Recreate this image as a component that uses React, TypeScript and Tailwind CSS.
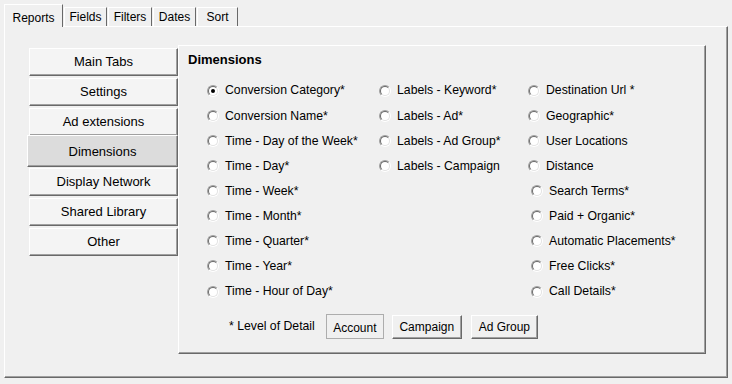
import React from "react";

const raised =
  "border border-t-white border-l-white border-r-[#696969] border-b-[#696969] shadow-[inset_-1px_-1px_0_#a0a0a0]";

function Radio({ checked }: { checked?: boolean }) {
  return (
    <div className="w-[12px] h-[12px] shrink-0 rounded-full border border-t-[#a0a0a0] border-l-[#a0a0a0] border-r-white border-b-white">
      <div className="w-full h-full rounded-full border border-t-[#696969] border-l-[#696969] border-r-[#e3e3e3] border-b-[#e3e3e3] bg-white flex items-center justify-center">
        {checked && <div className="w-[4px] h-[4px] rounded-full bg-black" />}
      </div>
    </div>
  );
}

function Item({ label, checked, shift }: { label: string; checked?: boolean; shift?: boolean }) {
  return (
    <div className={`h-[25.125px] flex items-center gap-[6px] ${shift ? "pl-[3px]" : ""}`}>
      <Radio checked={checked} />
      <span className="whitespace-nowrap leading-none text-[12.25px]">{label}</span>
    </div>
  );
}

const col1 = [
  "Conversion Category*",
  "Conversion Name*",
  "Time - Day of the Week*",
  "Time - Day*",
  "Time - Week*",
  "Time - Month*",
  "Time - Quarter*",
  "Time - Year*",
  "Time - Hour of Day*",
];
const col2 = ["Labels - Keyword*", "Labels - Ad*", "Labels - Ad Group*", "Labels - Campaign"];
const col3 = [
  "Destination Url *",
  "Geographic*",
  "User Locations",
  "Distance",
  "Search Terms*",
  "Paid + Organic*",
  "Automatic Placements*",
  "Free Clicks*",
  "Call Details*",
];

const sideButtons = [
  "Main Tabs",
  "Settings",
  "Ad extensions",
  "Dimensions",
  "Display Network",
  "Shared Library",
  "Other",
];

export default function App() {
  return (
    <div
      className="w-[732px] h-[384px] bg-[#f0f0f0] text-black text-[12px] overflow-hidden"
      style={{ fontFamily: '"Liberation Sans", Arial, sans-serif' }}
    >
      {/* tab strip */}
      <div className="flex items-end h-[26px] pl-[4px]">
        <div className="relative z-10 h-[23px] -mb-px w-[59px] bg-[#f0f0f0] border-t border-l border-r border-t-white border-l-white border-r-[#696969] flex items-start justify-center pt-[4px]">
          Reports
        </div>
        <div className="h-[19px] w-[43px] ml-px border-t border-l border-r border-t-white border-l-white border-r-[#696969] flex items-center justify-center">
          Fields
        </div>
        <div className="h-[19px] w-[44px] ml-px border-t border-l border-r border-t-white border-l-white border-r-[#696969] flex items-center justify-center">
          Filters
        </div>
        <div className="h-[19px] w-[43px] ml-px border-t border-l border-r border-t-white border-l-white border-r-[#696969] flex items-center justify-center">
          Dates
        </div>
        <div className="h-[19px] w-[41px] ml-px border-t border-l border-r border-t-white border-l-white border-r-[#696969] flex items-center justify-center">
          Sort
        </div>
      </div>

      {/* tab page */}
      <div className={`ml-[4px] w-[724px] h-[352px] ${raised} pl-[24px] pt-[18px] flex items-start`}>
        {/* side buttons */}
        <div className="w-[149px] mt-[3px] flex flex-col gap-[2px]">
          {sideButtons.map((b) =>
            b === "Dimensions" ? (
              <div
                key={b}
                className={`h-[32px] -ml-[2px] -mt-[3px] -mb-[1px] w-[151px] bg-[#dcdcdc] ${raised} flex items-center justify-center text-[13px] pt-px`}
              >
                {b}
              </div>
            ) : (
              <div
                key={b}
                className={`h-[28px] bg-[#f4f4f4] ${raised} flex items-center justify-center text-[13px]`}
              >
                {b}
              </div>
            )
          )}
        </div>

        {/* group box */}
        <div className={`w-[528px] h-[309px] ${raised} pl-[9px] pt-[6px]`}>
          <div className="font-bold text-[13px] leading-[15px]">Dimensions</div>
          <div className="flex mt-[11px] pl-[19px]">
            <div className="w-[172px]">
              {col1.map((l, i) => (
                <Item key={l} label={l} checked={i === 0} />
              ))}
            </div>
            <div className="w-[149px]">
              {col2.map((l) => (
                <Item key={l} label={l} />
              ))}
            </div>
            <div>
              {col3.map((l, i) => (
                <Item key={l} label={l} shift={i >= 4} />
              ))}
            </div>
          </div>
          <div className="flex items-center mt-[10px] pl-[41px]">
            <span className="mr-[11px] whitespace-nowrap text-[12.25px]">* Level of Detail</span>
            <div className="h-[25px] w-[58px] border border-[#adadad] flex items-center justify-center pt-[2px]">
              Account
            </div>
            <div className={`ml-[8px] h-[24px] w-[70px] ${raised} flex items-center justify-center`}>
              Campaign
            </div>
            <div className={`ml-[9px] h-[24px] w-[67px] ${raised} flex items-center justify-center`}>
              Ad Group
            </div>
          </div>
        </div>
      </div>
    </div>
  );
}
